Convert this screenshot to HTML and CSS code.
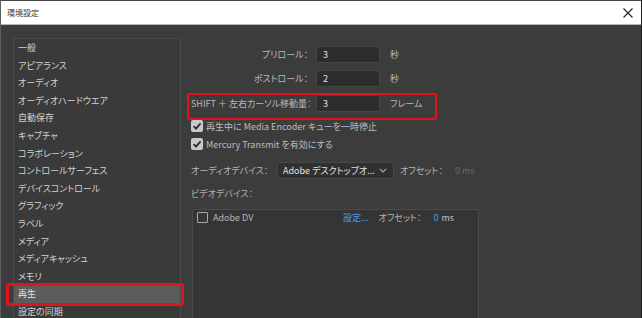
FILE: index.html
```html
<!DOCTYPE html>
<html lang="ja">
<head>
    <meta charset="UTF-8">
    <meta name="viewport" content="width=device-width, initial-scale=1.0">
    <title>環境設定</title>
    <link rel="stylesheet" href="styles.css">
</head>
<body>
    <div class="window">
        <div class="titlebar">
            <span class="title">環境設定</span>
            <svg class="close" width="10" height="10" viewBox="0 0 10 10">
                <path d="M0.5 0.5 L9.5 9.5 M9.5 0.5 L0.5 9.5" stroke="#222" stroke-width="1.1" fill="none"/>
            </svg>
        </div>
        <div class="main">
            <div class="sidebar">
                <ul>
                    <li>一般</li>
                    <li>アピアランス</li>
                    <li>オーディオ</li>
                    <li>オーディオハードウエア</li>
                    <li>自動保存</li>
                    <li>キャプチャ</li>
                    <li>コラボレーション</li>
                    <li>コントロールサーフェス</li>
                    <li>デバイスコントロール</li>
                    <li>グラフィック</li>
                    <li>ラベル</li>
                    <li>メディア</li>
                    <li>メディアキャッシュ</li>
                    <li>メモリ</li>
                    <li class="selected">再生</li>
                    <li>設定の同期</li>
                </ul>
            </div>
            <div class="content">
                <div class="field-row first">
                    <span class="label">プリロール：</span>
                    <span class="input">3</span>
                    <span class="unit">秒</span>
                </div>
                <div class="field-row">
                    <span class="label">ポストロール：</span>
                    <span class="input">2</span>
                    <span class="unit">秒</span>
                </div>
                <div class="field-row marked">
                    <span class="label">SHIFT ＋ 左右カーソル移動量：</span>
                    <span class="input">3</span>
                    <span class="unit">フレーム</span>
                </div>

                <div class="check-row first">
                    <svg class="check" width="12" height="12" viewBox="0 0 12 12">
                        <rect x="0" y="0" width="12" height="12" rx="2" fill="#c9c9c9"/>
                        <path d="M2.6 6.2 L5 8.6 L9.6 3.4" stroke="#2c2c2c" stroke-width="1.8" fill="none"/>
                    </svg>
                    <span>再生中に Media Encoder キューを一時停止</span>
                </div>
                <div class="check-row">
                    <svg class="check" width="12" height="12" viewBox="0 0 12 12">
                        <rect x="0" y="0" width="12" height="12" rx="2" fill="#c9c9c9"/>
                        <path d="M2.6 6.2 L5 8.6 L9.6 3.4" stroke="#2c2c2c" stroke-width="1.8" fill="none"/>
                    </svg>
                    <span>Mercury Transmit を有効にする</span>
                </div>

                <div class="device-row">
                    <span class="device-label">オーディオデバイス：</span>
                    <div class="select">
                        <span>Adobe デスクトップオ...</span>
                        <svg width="8" height="5" viewBox="0 0 8 5">
                            <path d="M0.8 0.8 L4 4 L7.2 0.8" stroke="#aaa" stroke-width="1.1" fill="none"/>
                        </svg>
                    </div>
                    <span class="offset-label">オフセット：</span>
                    <span class="dim">0 ms</span>
                </div>

                <div class="section-label">ビデオデバイス：</div>
                <div class="device-box">
                    <div class="device-item">
                        <span class="box-empty"></span>
                        <span class="name">Adobe DV</span>
                        <span class="link">設定...</span>
                        <span class="offset">オフセット：</span>
                        <span class="link num">0</span>
                        <span>ms</span>
                    </div>
                </div>
            </div>
        </div>
    </div>
</body>
</html>
```
FILE: styles.css
```css
* {
    box-sizing: border-box;
}
body {
    margin: 0;
    width: 642px;
    height: 318px;
    overflow: hidden;
    background-color: #3c3c3c;
    font-family: "Noto Sans CJK JP", "Noto Sans", sans-serif;
    font-size: 9px;
    font-feature-settings: "palt";
    color: #c2c2c2;
}
.window {
    height: 318px;
    display: flex;
    flex-direction: column;
    border-left: 1px solid #5e5e5e;
    border-right: 1px solid #1e1e1e;
}
.titlebar {
    height: 25px;
    flex-shrink: 0;
    background-color: #fff;
    border-top: 1px solid #444;
    border-bottom: 1px solid #b8b8b8;
    display: flex;
    justify-content: space-between;
    align-items: center;
    padding: 0 8px 0 6px;
}
.title {
    color: #3a3a3a;
    font-size: 8px;
}
.main {
    flex: 1;
    display: flex;
    padding: 13px 0 0 12px;
}
.sidebar {
    width: 168px;
    border: 1px solid #4b4b4b;
    border-bottom: none;
    background-color: #3a3a3a;
}
.sidebar ul {
    list-style-type: none;
    margin: 0;
    padding: 0;
}
.sidebar li {
    height: 17.6px;
    line-height: 17.6px;
    padding-left: 4px;
    color: #d2d2d2;
    white-space: nowrap;
}
.sidebar li.selected {
    position: relative;
    background-color: #5c5c5c;
    color: #e6e6e6;
}
.sidebar li.selected::after {
    content: "";
    position: absolute;
    left: -8px;
    top: -2px;
    right: -4px;
    bottom: -3px;
    border: 3px solid #e3121c;
    border-radius: 3px;
}
.content {
    margin-left: 10px;
    display: flex;
    flex-direction: column;
}
.field-row {
    display: flex;
    align-items: center;
    height: 17px;
    margin-top: 7px;
}
.field-row.first {
    margin-top: 8px;
}
.field-row.marked {
    position: relative;
    margin-top: 8px;
}
.field-row.marked::after {
    content: "";
    position: absolute;
    left: -4px;
    top: -2px;
    width: 246px;
    height: 23px;
    border: 2.5px solid #e3121c;
    border-radius: 2px;
}
.label {
    width: 117px;
    text-align: right;
    white-space: nowrap;
    color: #b9b9b9;
}
.input {
    width: 64px;
    height: 17px;
    margin-left: 8px;
    padding-left: 6px;
    line-height: 15px;
    background-color: #2d2d2d;
    border: 1px solid #464646;
    border-radius: 2px;
    color: #e0e0e0;
}
.unit {
    margin-left: 10px;
    color: #b9b9b9;
}
.check-row {
    display: flex;
    align-items: center;
    height: 12px;
    margin-top: 6px;
}
.check-row.first {
    margin-top: 8px;
}
.check-row span {
    margin-left: 3px;
    color: #bdbdbd;
}
.device-row {
    display: flex;
    align-items: center;
    height: 17px;
    margin-top: 12px;
}
.device-label {
    width: 86px;
    color: #b5b5b5;
}
.select {
    width: 117px;
    height: 17px;
    display: flex;
    justify-content: space-between;
    align-items: center;
    padding: 0 6px 0 5px;
    background-color: #303030;
    border: 1px solid #474747;
    border-radius: 2px;
    color: #e2e2e2;
}
.offset-label {
    width: 55px;
    margin-left: 6px;
    color: #b5b5b5;
}
.dim {
    color: #686868;
}
.section-label {
    height: 12px;
    line-height: 12px;
    margin-top: 9px;
    color: #b0b0b0;
}
.device-box {
    width: 287px;
    height: 120px;
    margin: 9px 0 0 1px;
    background-color: #353535;
    border: 1px solid #4a4a4a;
    border-radius: 2px;
}
.device-item {
    display: flex;
    align-items: center;
    height: 13px;
    margin-top: 1px;
    padding-left: 4px;
}
.box-empty {
    width: 11px;
    height: 11px;
    border: 1.5px solid #a9a9a9;
    border-radius: 1px;
}
.name {
    width: 130px;
    margin-left: 5px;
    color: #b5b5b5;
}
.link {
    color: #4d9be0;
}
.offset {
    width: 55px;
    margin-left: 10px;
    color: #b5b5b5;
}
.num {
    margin-right: 3px;
}
```
